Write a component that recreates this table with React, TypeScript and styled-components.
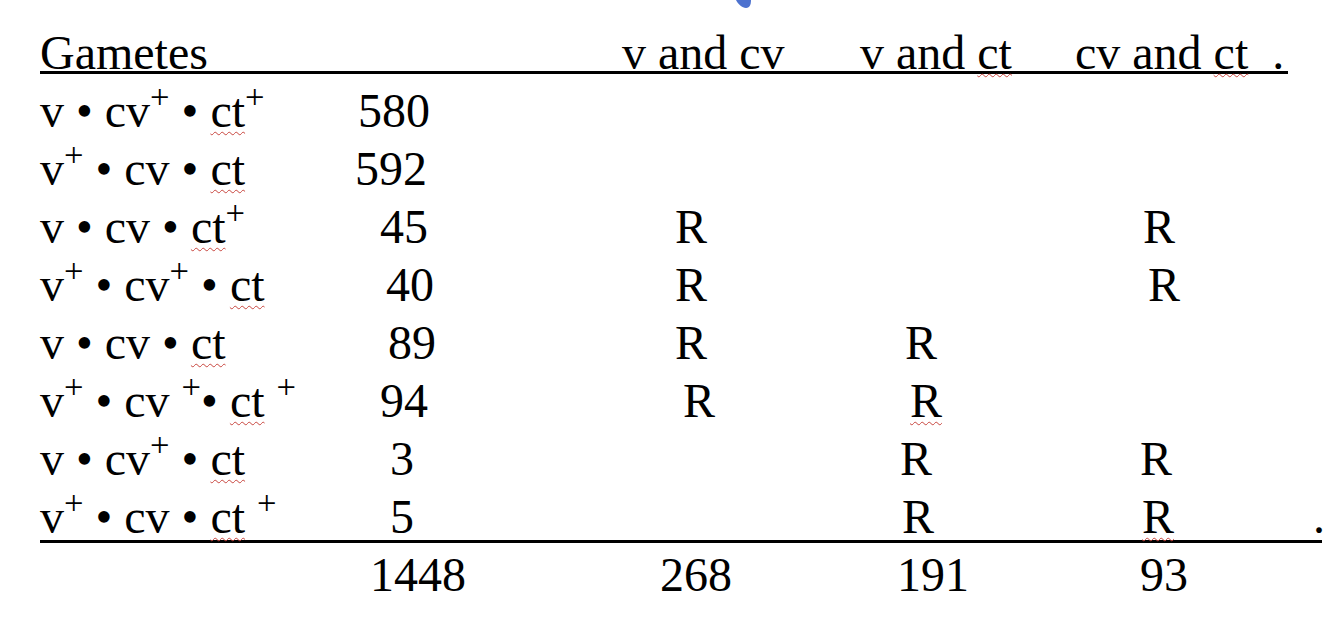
import type { ReactNode } from "react";
import styled, { createGlobalStyle } from "styled-components";

const GlobalStyle = createGlobalStyle`
  html,
  body {
    margin: 0;
    padding: 0;
    background: #fff;
  }

  body {
    font-family: "Liberation Serif", "Times New Roman", serif;
    color: #000;
    overflow: hidden;
  }
`;

type Mark = { pad: number; spell?: boolean; trail?: number } | null;

type Gamete = {
  label: ReactNode;
  count: string;
  countPad: number;
  marks: [Mark, Mark, Mark];
};

const Sup = ({ children }: { children: ReactNode }) => (
  <StyledSup>{children}</StyledSup>
);

const Ct = () => <StyledSpell>ct</StyledSpell>;

const gametes: Gamete[] = [
  {
    label: (
      <>
        v • cv<Sup>+</Sup> • <Ct />
        <Sup>+</Sup>
      </>
    ),
    count: "580",
    countPad: 8,
    marks: [null, null, null],
  },
  {
    label: (
      <>
        v<Sup>+</Sup> • cv • <Ct />
      </>
    ),
    count: "592",
    countPad: 5,
    marks: [null, null, null],
  },
  {
    label: (
      <>
        v • cv • <Ct />
        <Sup>+</Sup>
      </>
    ),
    count: "45",
    countPad: 30,
    marks: [{ pad: 53 }, null, { pad: 68 }],
  },
  {
    label: (
      <>
        v<Sup>+</Sup> • cv<Sup>+</Sup> • <Ct />
      </>
    ),
    count: "40",
    countPad: 36,
    marks: [{ pad: 53 }, null, { pad: 73 }],
  },
  {
    label: (
      <>
        v • cv • <Ct />
      </>
    ),
    count: "89",
    countPad: 38,
    marks: [{ pad: 53 }, { pad: 45 }, null],
  },
  {
    label: (
      <>
        v<Sup>+</Sup> • cv <Sup>+</Sup>• <Ct /> <Sup>+</Sup>
      </>
    ),
    count: "94",
    countPad: 30,
    marks: [{ pad: 61 }, { pad: 50, spell: true }, null],
  },
  {
    label: (
      <>
        v • cv<Sup>+</Sup> • <Ct />
      </>
    ),
    count: "3",
    countPad: 40,
    marks: [null, { pad: 40 }, { pad: 65 }],
  },
  {
    label: (
      <>
        v<Sup>+</Sup> • cv • <Ct /> <Sup>+</Sup>
      </>
    ),
    count: "5",
    countPad: 40,
    marks: [null, { pad: 42 }, { pad: 67, spell: true, trail: 139 }],
  },
];

const totals = [
  { value: "1448", pad: 20 },
  { value: "268", pad: 38 },
  { value: "191", pad: 37 },
  { value: "93", pad: 65 },
];

function App() {
  return (
    <>
      <GlobalStyle />
      <StyledPage>
        <StyledInk width="22" height="10" viewBox="0 0 22 10">
          <path d="M4 0 C 6 4, 10 8, 14 8 C 18 8, 19 4, 19 0 Z" fill="#4d72cf" />
        </StyledInk>
        <StyledTable>
          <StyledRow $ruleAt={47} $ruleWidth={1248}>
            <StyledCell $pad={0}>Gametes</StyledCell>
            <StyledCell $pad={0} />
            <StyledCell $pad={0}>v and cv</StyledCell>
            <StyledCell $pad={0}>
              v and <StyledSpell>ct</StyledSpell>
            </StyledCell>
            <StyledCell $pad={0}>
              cv and <StyledSpell>ct</StyledSpell>
              <StyledTrail $gap={24}>.</StyledTrail>
            </StyledCell>
          </StyledRow>
          {gametes.map((g, i) => (
            <StyledRow
              key={g.count}
              $ruleAt={i === gametes.length - 1 ? 52 : undefined}
              $ruleWidth={1282}
            >
              <StyledCell $pad={0}>{g.label}</StyledCell>
              <StyledCell $pad={g.countPad}>{g.count}</StyledCell>
              {g.marks.map((m, j) => (
                <StyledCell key={j} $pad={m ? m.pad : 0}>
                  {m && (m.spell ? <StyledSpell>R</StyledSpell> : "R")}
                  {m?.trail && <StyledTrail $gap={m.trail}>.</StyledTrail>}
                </StyledCell>
              ))}
            </StyledRow>
          ))}
          <StyledRow>
            <StyledCell $pad={0} />
            {totals.map((t) => (
              <StyledCell key={t.value} $pad={t.pad}>
                {t.value}
              </StyledCell>
            ))}
          </StyledRow>
        </StyledTable>
      </StyledPage>
    </>
  );
}

export default App;

const StyledPage = styled.div`
  position: relative;
  width: 1334px;
  height: 634px;
  padding: 24px 0 0 40px;
  box-sizing: border-box;
`;

const StyledInk = styled.svg`
  position: absolute;
  top: 0;
  left: 732px;
`;

const StyledTable = styled.div`
  display: flex;
  flex-direction: column;
  font-size: 48px;
  line-height: 58px;
`;

const StyledRow = styled.div<{ $ruleAt?: number; $ruleWidth?: number }>`
  display: grid;
  grid-template-columns: 310px 272px 238px 215px 250px;
  height: 58px;
  white-space: nowrap;
  background: ${({ $ruleAt, $ruleWidth }) =>
    $ruleAt !== undefined
      ? `linear-gradient(#000, #000) no-repeat 0 ${$ruleAt}px / ${$ruleWidth}px 3px`
      : "none"};
`;

const StyledCell = styled.div<{ $pad: number }>`
  padding-left: ${({ $pad }) => $pad}px;
`;

const StyledSup = styled.span`
  font-size: 0.72em;
  line-height: 0;
  vertical-align: 19px;
`;

const StyledSpell = styled.span`
  text-decoration: underline wavy #c8463f;
  text-decoration-thickness: 1px;
  text-underline-offset: 4px;
  text-decoration-skip-ink: none;
`;

const StyledTrail = styled.span<{ $gap: number }>`
  margin-left: ${({ $gap }) => $gap}px;
`;
